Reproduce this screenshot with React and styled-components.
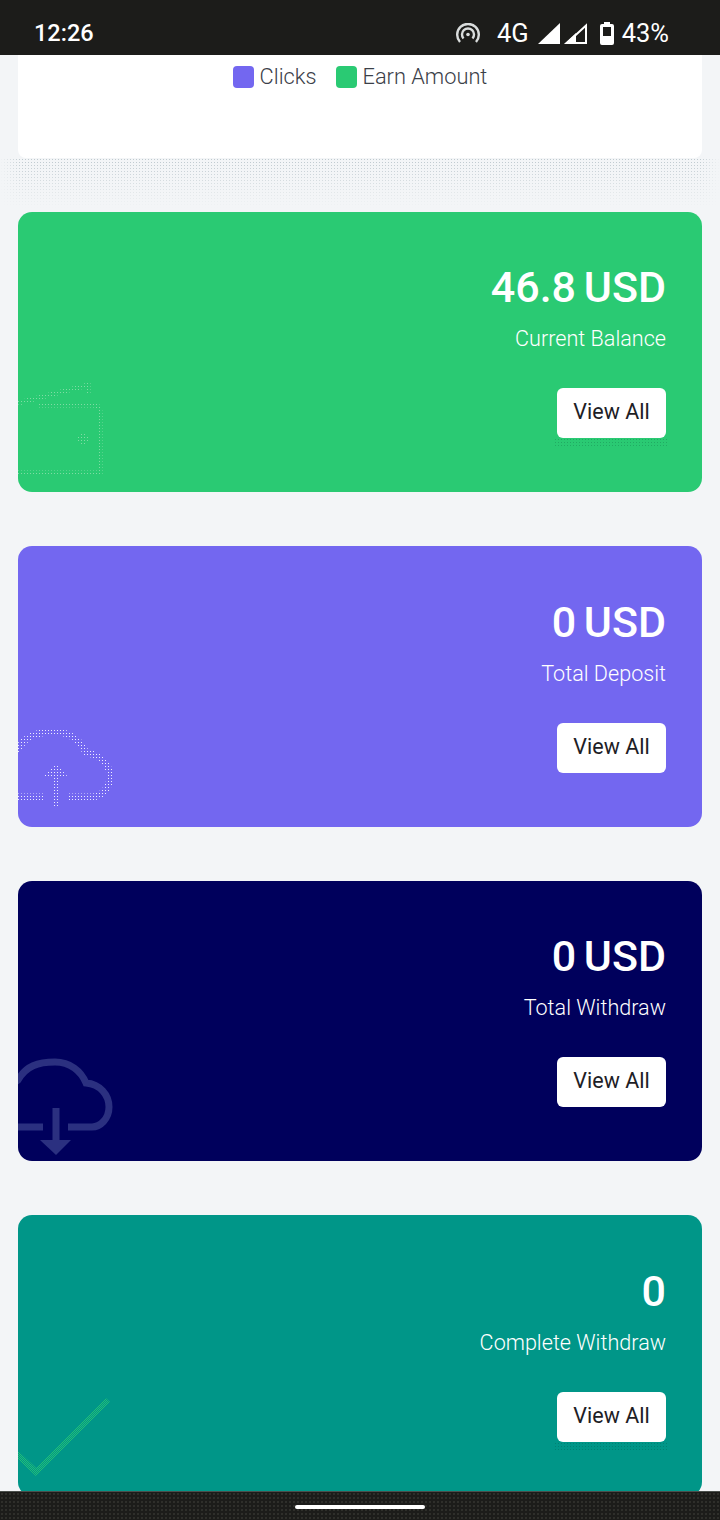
import React from "react";
import styled, { createGlobalStyle } from "styled-components";

const GlobalStyle = createGlobalStyle`
  html, body {
    margin: 0;
    padding: 0;
    background: #f3f5f7;
    font-family: "Roboto", "Liberation Sans", sans-serif;
  }
`;

const Page = styled.div`
  position: relative;
  width: 720px;
  height: 1520px;
  overflow: hidden;
`;

const StatusBar = styled.header`
  height: 55px;
  box-sizing: border-box;
  padding: 21px 51px 0 34px;
  background: #1c1c1a;
  color: #fff;
  display: flex;
  justify-content: space-between;
  align-items: flex-start;
  line-height: 25px;
`;

const StatusTime = styled.span`
  font-size: 23.5px;
  font-weight: 500;
`;

const StatusRight = styled.div`
  display: flex;
  align-items: flex-start;
  font-size: 25.5px;
  font-weight: 400;
`;

const StatusText = styled.span`
  margin-left: ${(p) => p.$left}px;
`;

const StatusIcon = styled.svg`
  display: block;
  margin-left: ${(p) => p.$left || 0}px;
  margin-top: ${(p) => p.$top ?? 2}px;
`;

const Content = styled.main`
  padding: 0 18px;
  display: flex;
  flex-direction: column;
  gap: 54px;
`;

const ChartCard = styled.section`
  position: relative;
  height: 103px;
  box-sizing: border-box;
  padding-top: 11px;
  background: #fff;
  border-radius: 0 0 8px 8px;

  &::after {
    content: "";
    position: absolute;
    left: -18px;
    right: -18px;
    top: 100%;
    height: 50px;
    background-image: radial-gradient(#bcc7cc 0.7px, transparent 0.8px);
    background-size: 3px 3px;
    -webkit-mask-image: linear-gradient(#000, transparent),
      linear-gradient(to right, transparent, #000 20px, #000 calc(100% - 20px), transparent);
    -webkit-mask-composite: source-in;
    mask-image: linear-gradient(#000, transparent),
      linear-gradient(to right, transparent, #000 20px, #000 calc(100% - 20px), transparent);
    mask-composite: intersect;
  }
`;

const Legend = styled.div`
  display: flex;
  justify-content: center;
  align-items: center;
  gap: 19px;
`;

const LegendItem = styled.div`
  display: flex;
  align-items: center;
  gap: 6px;
  font-size: 21.8px;
  font-weight: 300;
  line-height: 22px;
  color: #3b4048;
`;

const Swatch = styled.span`
  width: 21px;
  height: 22px;
  border-radius: 4px;
  background: ${(p) => p.$color};
`;

const StatCard = styled.article`
  position: relative;
  height: 280.4px;
  box-sizing: border-box;
  padding: 50.4px 36px 0 0;
  overflow: hidden;
  border-radius: 14px;
  background: ${(p) => p.$color};
  color: #fff;
  display: flex;
  flex-direction: column;
  align-items: flex-end;
`;

const Amount = styled.div`
  font-size: 43px;
  font-weight: 500;
  line-height: 50px;
  word-spacing: -3px;
`;

const Label = styled.div`
  margin-top: 14px;
  font-size: 21.6px;
  font-weight: 300;
  line-height: 26px;
`;

const ViewButton = styled.button`
  position: relative;
  width: 109px;
  height: 50px;
  margin-top: 36px;
  padding: 0 0 3px;
  border: 0;
  border-radius: 6px;
  background: #fff;
  color: #1d2025;
  font-family: inherit;
  font-size: 21.5px;
  font-weight: 400;

  &::after {
    content: ${(p) => (p.$halo ? '""' : "none")};
    position: absolute;
    left: -3px;
    right: -3px;
    top: 100%;
    height: 8px;
    background-image: radial-gradient(rgba(0, 60, 40, 0.22) 0.7px, transparent 0.8px);
    background-size: 3px 3px;
  }
`;

const Watermark = styled.svg`
  position: absolute;
  left: 0;
  bottom: 0;
  width: 100px;
  height: 100px;
  overflow: visible;
`;

const BottomNav = styled.nav`
  position: absolute;
  left: 0;
  right: 0;
  bottom: 0;
  height: 29px;
  box-sizing: border-box;
  padding-top: 13px;
  border-top: 1px solid #4b4f4c;
  background-color: #1c1c1a;
  background-image: radial-gradient(#30302c 0.7px, transparent 0.8px);
  background-size: 4px 4px;
  display: flex;
  justify-content: center;
`;

const HomePill = styled.div`
  width: 130px;
  height: 4px;
  border-radius: 2px;
  background: #fff;
`;

const Dots = ({ id, color }) => (
  <defs>
    <pattern id={id} width="2" height="2" patternUnits="userSpaceOnUse">
      <rect width="1" height="1" fill={color} />
      <rect x="1" y="1" width="1" height="1" fill={color} />
    </pattern>
  </defs>
);

const SparseDots = ({ id, color }) => (
  <defs>
    <pattern id={id} width="3" height="3" patternUnits="userSpaceOnUse">
      <rect width="1" height="1" fill={color} />
    </pattern>
  </defs>
);

const WalletIcon = () => (
  <Watermark viewBox="0 0 100 100">
    <SparseDots id="wallet-dots" color="#7fdca4" />
    <g fill="none" stroke="url(#wallet-dots)" strokeWidth="5">
      <path d="M0 11 L70 -7 V3" />
      <path d="M19 13 H75 Q82 13 82 20 V81 H0" />
      <circle cx="65" cy="47" r="3" />
    </g>
  </Watermark>
);

const UploadIcon = () => (
  <Watermark viewBox="0 0 100 100">
    <SparseDots id="upload-dots" color="#eeecff" />
    <path
      d="M25 70 H-3 C-18 70 -22 35 0 22 C8 8 20 5 37 5 C52 5 63 14 68 26 C82 27 92 38 92 50 C92 62 82 70 74 70 H50"
      fill="none"
      stroke="url(#upload-dots)"
      strokeWidth="7"
    />
    <path d="M38 81 V46" fill="none" stroke="url(#upload-dots)" strokeWidth="7" />
    <path d="M25 50 L38 36 L50 50 Z" fill="url(#upload-dots)" />
  </Watermark>
);

const DownloadIcon = () => (
  <Watermark viewBox="0 0 100 100">
    <path
      d="M25 66 H-3 C-18 66 -22 33 0 19 C8 5 20 1 37 1 C52 1 63 10 68 22 C82 23 91 34 91 46 C91 58 82 66 74 66 H50"
      fill="none"
      stroke="#2b3080"
      strokeWidth="7"
    />
    <path d="M38 47 V82" fill="none" stroke="#2b3080" strokeWidth="7" />
    <path d="M22 79 H53 L38 94 Z" fill="#2b3080" />
  </Watermark>
);

const CheckIcon = () => (
  <Watermark viewBox="0 0 100 100">
    <Dots id="check-dots" color="#2ecc71" />
    <path
      d="M-2 57 L18 76 L90 4"
      fill="none"
      stroke="url(#check-dots)"
      strokeWidth="6"
      opacity="0.75"
    />
  </Watermark>
);

const stats = [
  { amount: "46.8 USD", label: "Current Balance", color: "#2aca73", Icon: WalletIcon, halo: true },
  { amount: "0 USD", label: "Total Deposit", color: "#7367f0", Icon: UploadIcon },
  { amount: "0 USD", label: "Total Withdraw", color: "#00005c", Icon: DownloadIcon },
  { amount: "0", label: "Complete Withdraw", color: "#009688", Icon: CheckIcon, halo: true },
];

export default function App() {
  return (
    <Page>
      <GlobalStyle />
      <StatusBar>
        <StatusTime>12:26</StatusTime>
        <StatusRight>
          <StatusIcon width="24" height="20" viewBox="0 0 24 20" fill="none" stroke="#d9dcdc" strokeWidth="2.4">
            <path d="M4 19 A10.8 10.8 0 1 1 20 19" />
            <path d="M7.5 15.5 A6 6 0 1 1 16.5 15.5" />
            <circle cx="12" cy="11.5" r="1.8" fill="#d9dcdc" stroke="none" />
          </StatusIcon>
          <StatusText $left={17}>4G</StatusText>
          <StatusIcon $left={9} width="22" height="21" viewBox="0 0 22 21">
            <path d="M22 0 V21 H0 Z" fill="#fff" />
          </StatusIcon>
          <StatusIcon $left={4} width="23" height="21" viewBox="0 0 23 21">
            <path d="M22 2.5 V20 H3 Z" fill="none" stroke="#fff" strokeWidth="2" />
            <path d="M12 10 V21 H0 Z" fill="#fff" />
          </StatusIcon>
          <StatusIcon $left={13} $top={1} width="14" height="23" viewBox="0 0 14 23">
            <path
              d="M4 0 H10 V2 H12 Q14 2 14 4 V21 Q14 23 12 23 H2 Q0 23 0 21 V4 Q0 2 2 2 H4 Z"
              fill="#fff"
            />
            <rect x="3" y="5" width="8" height="9" fill="#1c1c1a" />
          </StatusIcon>
          <StatusText $left={8}>43%</StatusText>
        </StatusRight>
      </StatusBar>
      <Content>
        <ChartCard>
          <Legend>
            <LegendItem>
              <Swatch $color="#7367f0" />
              Clicks
            </LegendItem>
            <LegendItem>
              <Swatch $color="#2aca73" />
              Earn Amount
            </LegendItem>
          </Legend>
        </ChartCard>
        {stats.map(({ amount, label, color, Icon, halo }) => (
          <StatCard key={label} $color={color}>
            <Icon />
            <Amount>{amount}</Amount>
            <Label>{label}</Label>
            <ViewButton $halo={halo}>View All</ViewButton>
          </StatCard>
        ))}
      </Content>
      <BottomNav>
        <HomePill />
      </BottomNav>
    </Page>
  );
}
